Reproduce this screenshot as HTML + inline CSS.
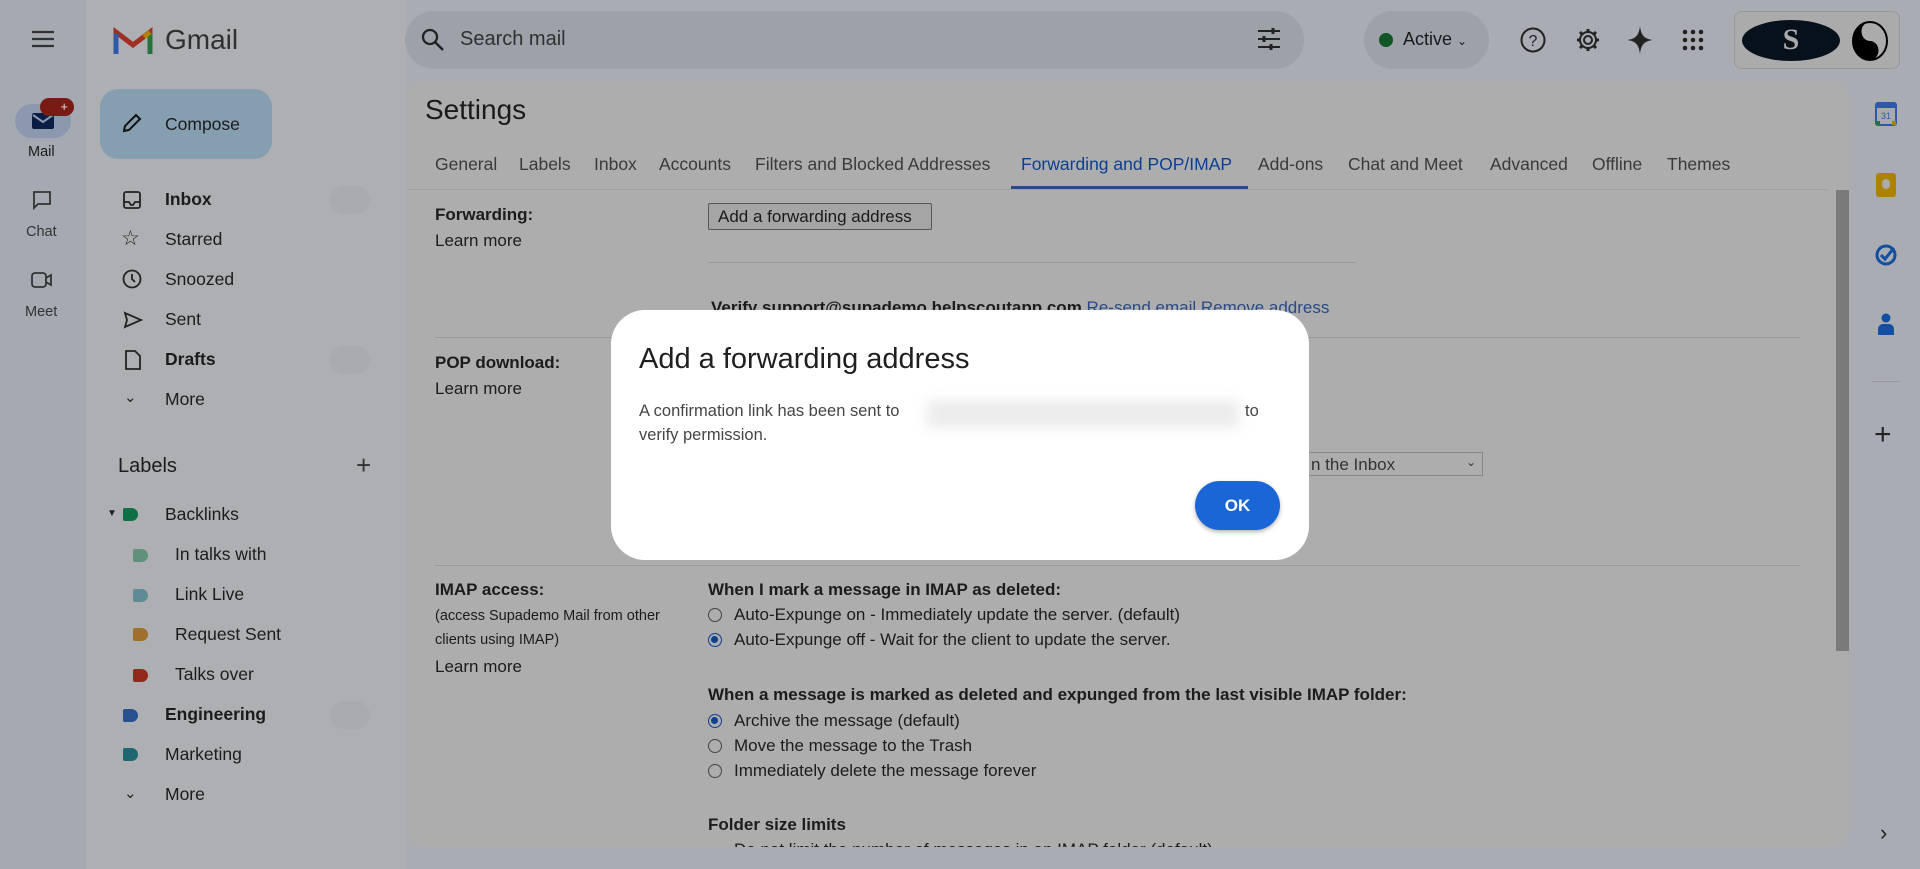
<!DOCTYPE html>
<html><head><meta charset="utf-8"><style>
*{box-sizing:border-box;margin:0;padding:0}
body{width:1920px;height:869px;overflow:hidden;background:#a9acb2;font-family:"Liberation Sans",Arial,sans-serif;color:#1a1a1a;position:relative}
.a{position:absolute;white-space:nowrap}
.nav{font-size:17.5px;color:#1c1c1c}
.b{font-weight:bold}
.link{color:#2a4a85}
.tab{font-size:17.5px;color:#3a3a3a;top:154px}
.lbl{font-size:17px;color:#1c1c1c}
.radio{width:14px;height:14px;border:1.5px solid #444;border-radius:50%;}
.radio.on{border-color:#0d3f8f}
.radio.on::after{content:"";position:absolute;left:2px;top:2px;width:7px;height:7px;border-radius:50%;background:#0d3f8f}
.tag{width:15px;height:13px;border-radius:2px 7px 7px 2px}
</style></head><body>
<!-- left rail -->
<div class="a" style="left:0;top:0;width:86px;height:869px;background:#a5a9b1"></div>
<svg class="a" style="left:30px;top:29px" width="26" height="20" viewBox="0 0 26 20"><path d="M2 3h22M2 10h22M2 17h22" stroke="#333" stroke-width="2.2"/></svg>
<div class="a" style="left:15px;top:104px;width:56px;height:34px;border-radius:17px;background:#8c98ad"></div>
<svg class="a" style="left:31px;top:111px" width="24" height="20" viewBox="0 0 24 20"><rect x="1" y="2" width="22" height="16" rx="2" fill="#0b1d44"/><path d="M2 4l10 7 10-7" stroke="#8c98ad" stroke-width="2" fill="none"/></svg>
<div class="a" style="left:40px;top:98px;width:34px;height:18px;border-radius:9px;background:#7a1a15;color:#ddd;font-size:13px;text-align:right;padding-right:6px;line-height:17px">+</div>
<div class="a" style="left:28px;top:144px;font-size:14.5px;color:#1c1c1c">Mail</div>
<svg class="a" style="left:31px;top:189px" width="22" height="22" viewBox="0 0 22 22"><path d="M3 3h16v12H7l-4 4z" stroke="#333" stroke-width="1.8" fill="none"/></svg>
<div class="a" style="left:26px;top:224px;font-size:14.5px;color:#333">Chat</div>
<svg class="a" style="left:30px;top:270px" width="24" height="20" viewBox="0 0 24 20"><rect x="2" y="3" width="14" height="14" rx="3" stroke="#333" stroke-width="1.8" fill="none"/><path d="M16 8l5-3v10l-5-3" stroke="#333" stroke-width="1.8" fill="none"/></svg>
<div class="a" style="left:25px;top:304px;font-size:14.5px;color:#333">Meet</div>
<!-- sidebar -->
<div class="a" style="left:86px;top:0;width:320px;height:869px;background:#adafb3"></div>
<svg class="a" style="left:113px;top:26px" width="40" height="30" viewBox="0 0 40 30"><path d="M3 28V6l17 13L37 6v22" fill="none" stroke="#a02e24" stroke-width="5"/><path d="M3 28V8" stroke="#2d5aa8" stroke-width="5"/><path d="M37 28V8" stroke="#247339" stroke-width="5"/><path d="M37 6l-6 5" stroke="#ad8203" stroke-width="5"/></svg>
<div class="a" style="left:165px;top:24px;font-size:28px;color:#303030">Gmail</div>
<div class="a" style="left:100px;top:89px;width:172px;height:70px;border-radius:18px;background:#869fb0"></div>
<svg class="a" style="left:120px;top:111px" width="24" height="24" viewBox="0 0 24 24"><path d="M4 20l1-5L16 4l4 4L9 19z" fill="none" stroke="#111" stroke-width="2"/></svg>
<div class="a nav" style="left:165px;top:114px">Compose</div>
<div class="a" style="left:330px;top:186px;width:40px;height:28px;border-radius:14px;background:#a8aaae"></div>
<div class="a" style="left:330px;top:346px;width:40px;height:28px;border-radius:14px;background:#a8aaae"></div>
<div class="a" style="left:330px;top:701px;width:40px;height:28px;border-radius:14px;background:#a8aaae"></div>
<svg class="a" style="left:121px;top:189px" width="22" height="22" viewBox="0 0 22 22"><rect x="3" y="3" width="16" height="16" rx="2" fill="none" stroke="#222" stroke-width="1.8"/><path d="M3 13h5l2 3h2l2-3h5" fill="none" stroke="#222" stroke-width="1.8"/></svg>
<div class="a nav b" style="left:165px;top:189px">Inbox</div>
<div class="a" style="left:121px;top:226px;font-size:21px;color:#222">☆</div>
<div class="a nav" style="left:165px;top:229px">Starred</div>
<svg class="a" style="left:121px;top:268px" width="22" height="22" viewBox="0 0 22 22"><circle cx="11" cy="11" r="8.5" fill="none" stroke="#222" stroke-width="1.8"/><path d="M11 6v5l3 3" fill="none" stroke="#222" stroke-width="1.8"/></svg>
<div class="a nav" style="left:165px;top:269px">Snoozed</div>
<svg class="a" style="left:122px;top:309px" width="22" height="22" viewBox="0 0 22 22"><path d="M3 4l16 7-16 7 2-7z" fill="none" stroke="#222" stroke-width="1.8"/></svg>
<div class="a nav" style="left:165px;top:309px">Sent</div>
<svg class="a" style="left:122px;top:349px" width="22" height="22" viewBox="0 0 22 22"><path d="M4 2h9l5 5v13H4z" fill="none" stroke="#222" stroke-width="1.8"/></svg>
<div class="a nav b" style="left:165px;top:349px">Drafts</div>
<div class="a" style="left:124px;top:388px;font-size:15px;color:#222">⌄</div>
<div class="a nav" style="left:165px;top:389px">More</div>
<div class="a" style="left:118px;top:455px;font-size:20px;color:#1c1c1c">Labels</div>
<div class="a" style="left:356px;top:450px;font-size:26px;color:#333;font-weight:300">+</div>
<div class="a" style="left:107px;top:508px;font-size:10px;color:#222">▼</div>
<div class="a tag" style="left:123px;top:508px;background:#0f7044"></div>
<div class="a nav" style="left:165px;top:504px">Backlinks</div>
<div class="a tag" style="left:133px;top:549px;background:#60917a"></div>
<div class="a nav" style="left:175px;top:544px">In talks with</div>
<div class="a tag" style="left:133px;top:589px;background:#5f8b94"></div>
<div class="a nav" style="left:175px;top:584px">Link Live</div>
<div class="a tag" style="left:133px;top:628px;background:#a06f2b"></div>
<div class="a nav" style="left:175px;top:624px">Request Sent</div>
<div class="a tag" style="left:133px;top:669px;background:#95281c"></div>
<div class="a nav" style="left:175px;top:664px">Talks over</div>
<div class="a tag" style="left:123px;top:709px;background:#285091"></div>
<div class="a nav b" style="left:165px;top:704px">Engineering</div>
<div class="a tag" style="left:123px;top:748px;background:#1c6770"></div>
<div class="a nav" style="left:165px;top:744px">Marketing</div>
<div class="a" style="left:124px;top:784px;font-size:15px;color:#222">⌄</div>
<div class="a nav" style="left:165px;top:784px">More</div>
<!-- top bar -->
<div class="a" style="left:405px;top:11px;width:899px;height:58px;border-radius:29px;background:#9da1a8"></div>
<svg class="a" style="left:420px;top:27px" width="26" height="26" viewBox="0 0 26 26"><circle cx="10" cy="10" r="7" fill="none" stroke="#222" stroke-width="2.3"/><path d="M15 15l8 8" stroke="#222" stroke-width="2.5"/></svg>
<div class="a" style="left:460px;top:28px;font-size:20px;color:#303030">Search mail</div>
<svg class="a" style="left:1256px;top:27px" width="26" height="24" viewBox="0 0 26 24"><path d="M2 4h22M2 12h22M2 20h22" stroke="#222" stroke-width="2"/><path d="M17 1v6M8 9v6M15 17v6" stroke="#222" stroke-width="3"/></svg>
<div class="a" style="left:1364px;top:11px;width:125px;height:58px;border-radius:29px;background:#9da1a8"></div>
<div class="a" style="left:1379px;top:33px;width:14px;height:14px;border-radius:50%;background:#105626"></div>
<div class="a" style="left:1403px;top:29px;font-size:18px;color:#1a1a1a">Active <span style="font-size:12px">⌄</span></div>
<svg class="a" style="left:1519px;top:26px" width="28" height="28" viewBox="0 0 28 28"><circle cx="14" cy="14" r="11.5" fill="none" stroke="#222" stroke-width="2"/><text x="14" y="20" text-anchor="middle" font-size="16" font-family="Liberation Sans" fill="#222">?</text></svg>
<svg class="a" style="left:1574px;top:26px" width="28" height="28" viewBox="0 0 28 28"><circle cx="14" cy="14" r="4" fill="none" stroke="#222" stroke-width="2"/><path d="M14 3v4M14 21v4M3 14h4M21 14h4M6 6l3 3M19 19l3 3M6 22l3-3M19 9l3-3" stroke="#222" stroke-width="3"/><circle cx="14" cy="14" r="8" fill="none" stroke="#222" stroke-width="2"/></svg>
<svg class="a" style="left:1626px;top:25px" width="28" height="30" viewBox="0 0 28 30"><path d="M14 1C15 10 18 14 27 15 18 16 15 20 14 29 13 20 10 16 1 15 10 14 13 10 14 1z" fill="#222"/></svg>
<svg class="a" style="left:1681px;top:28px" width="24" height="24" viewBox="0 0 24 24" fill="#222"><circle cx="4" cy="4" r="2.3"/><circle cx="12" cy="4" r="2.3"/><circle cx="20" cy="4" r="2.3"/><circle cx="4" cy="12" r="2.3"/><circle cx="12" cy="12" r="2.3"/><circle cx="20" cy="12" r="2.3"/><circle cx="4" cy="20" r="2.3"/><circle cx="12" cy="20" r="2.3"/><circle cx="20" cy="20" r="2.3"/></svg>
<div class="a" style="left:1734px;top:11px;width:166px;height:58px;border-radius:8px;background:#ababab;border:1px solid #999"></div>
<div class="a" style="left:1742px;top:20px;width:98px;height:41px;border-radius:50%;background:#06111b;color:#aaa;font:bold 30px 'Liberation Serif',serif;text-align:center;line-height:40px">S</div>
<svg class="a" style="left:1850px;top:20px" width="40" height="42" viewBox="0 0 40 42"><ellipse cx="20" cy="21" rx="17" ry="19" fill="#ababab" stroke="#000" stroke-width="2"/><path d="M20 2a17 19 0 0 0 0 38a8.5 9.5 0 0 0 0-19a8.5 9.5 0 0 1 0-19z" fill="#000"/><circle cx="20" cy="11" r="3" fill="#ababab"/><circle cx="20" cy="31" r="3" fill="#000"/></svg>
<!-- settings card -->
<div class="a" style="left:408px;top:81px;width:1441px;height:766px;background:#adadad;border-radius:16px"></div>
<div class="a" style="left:425px;top:94px;font-size:28px;color:#1a1a1a">Settings</div>
<div class="a tab" style="left:435px">General</div>
<div class="a tab" style="left:519px">Labels</div>
<div class="a tab" style="left:594px">Inbox</div>
<div class="a tab" style="left:659px">Accounts</div>
<div class="a tab" style="left:755px">Filters and Blocked Addresses</div>
<div class="a tab" style="left:1021px;color:#0d3f8f">Forwarding and POP/IMAP</div>
<div class="a tab" style="left:1258px">Add-ons</div>
<div class="a tab" style="left:1348px">Chat and Meet</div>
<div class="a tab" style="left:1490px">Advanced</div>
<div class="a tab" style="left:1592px">Offline</div>
<div class="a tab" style="left:1667px">Themes</div>
<div class="a" style="left:408px;top:189px;width:1420px;height:1px;background:#a0a0a0"></div>
<div class="a" style="left:1011px;top:186px;width:237px;height:3px;background:#2a4a85"></div>
<div class="a" style="left:1836px;top:190px;width:13px;height:461px;background:#7a7a7a"></div>
<div class="a lbl b" style="left:435px;top:205px">Forwarding:</div>
<div class="a lbl link" style="left:435px;top:231px">Learn more</div>
<div class="a" style="left:708px;top:203px;width:224px;height:27px;border:1px solid #555;background:#a5a5a5;border-radius:2px;font-size:17px;padding:3px 9px">Add a forwarding address</div>
<div class="a" style="left:708px;top:262px;width:648px;height:1px;background:#999"></div>
<div class="a lbl" style="left:711px;top:298px"><b>Verify support@supademo.helpscoutapp.com</b> <span class="link">Re-send email Remove address</span></div>
<div class="a" style="left:435px;top:337px;width:1365px;height:1px;background:#999"></div>
<div class="a lbl b" style="left:435px;top:353px">POP download:</div>
<div class="a lbl link" style="left:435px;top:379px">Learn more</div>
<div class="a" style="left:1200px;top:452px;width:283px;height:24px;border:1px solid #888;font-size:17px;padding:2px 6px;color:#333;padding-left:110px">n the Inbox<span style="position:absolute;right:6px;font-size:12px">⌄</span></div>
<div class="a" style="left:435px;top:565px;width:1365px;height:1px;background:#999"></div>
<div class="a lbl b" style="left:435px;top:580px">IMAP access:</div>
<div class="a" style="left:435px;top:608px;font-size:14.5px;color:#1c1c1c">(access Supademo Mail from other</div>
<div class="a" style="left:435px;top:632px;font-size:14.5px;color:#1c1c1c">clients using IMAP)</div>
<div class="a lbl link" style="left:435px;top:657px">Learn more</div>
<div class="a lbl b" style="left:708px;top:580px">When I mark a message in IMAP as deleted:</div>
<div class="a radio" style="left:708px;top:608px"></div><div class="a lbl" style="left:734px;top:605px">Auto-Expunge on - Immediately update the server. (default)</div>
<div class="a radio on" style="left:708px;top:633px"></div><div class="a lbl" style="left:734px;top:630px">Auto-Expunge off - Wait for the client to update the server.</div>
<div class="a lbl b" style="left:708px;top:685px">When a message is marked as deleted and expunged from the last visible IMAP folder:</div>
<div class="a radio on" style="left:708px;top:714px"></div><div class="a lbl" style="left:734px;top:711px">Archive the message (default)</div>
<div class="a radio" style="left:708px;top:739px"></div><div class="a lbl" style="left:734px;top:736px">Move the message to the Trash</div>
<div class="a radio" style="left:708px;top:764px"></div><div class="a lbl" style="left:734px;top:761px">Immediately delete the message forever</div>
<div class="a lbl b" style="left:708px;top:815px">Folder size limits</div>
<div class="a" style="left:708px;top:840px;width:1140px;height:7px;overflow:hidden"><div class="lbl" style="position:absolute;left:26px;top:0">Do not limit the number of messages in an IMAP folder (default)</div></div>
<!-- right panel -->
<svg class="a" style="left:1875px;top:102px" width="22" height="24" viewBox="0 0 22 24"><rect x="1" y="1" width="20" height="22" rx="2" fill="#aaa" stroke="#2d5aa8" stroke-width="2"/><rect x="1" y="1" width="20" height="5" fill="#2d5aa8"/><path d="M1 19h4v4H1z" fill="#247339"/><path d="M17 19h4v4h-4z" fill="#ad8203"/><text x="11" y="17" font-size="9" text-anchor="middle" fill="#2d5aa8" font-family="Liberation Sans">31</text></svg>
<div class="a" style="left:1876px;top:173px;width:20px;height:24px;border-radius:3px;background:#ad8203"></div>
<div class="a" style="left:1882px;top:179px;width:8px;height:10px;border-radius:4px;background:#aaa"></div>
<svg class="a" style="left:1874px;top:243px" width="24" height="24" viewBox="0 0 24 24"><circle cx="12" cy="12" r="9" fill="none" stroke="#124fa0" stroke-width="3"/><path d="M7 12l4 4 9-11" fill="none" stroke="#124fa0" stroke-width="3"/></svg>
<svg class="a" style="left:1876px;top:312px" width="20" height="24" viewBox="0 0 20 24"><circle cx="10" cy="6" r="4.5" fill="#124fa0"/><path d="M2 23v-6a5 5 0 0 1 5-5h6a5 5 0 0 1 5 5v6z" fill="#124fa0"/></svg>
<div class="a" style="left:1872px;top:381px;width:28px;height:1px;background:#999"></div>
<div class="a" style="left:1874px;top:418px;font-size:30px;color:#222;font-weight:300">+</div>
<div class="a" style="left:1880px;top:820px;font-size:22px;color:#222">›</div>
<!-- dialog -->
<div class="a" style="left:611px;top:310px;width:698px;height:250px;background:#fff;border-radius:34px"></div>
<div class="a" style="left:639px;top:343px;font-size:29px;color:#1f1f1f">Add a forwarding address</div>
<div class="a" style="left:639px;top:402px;font-size:16.5px;color:#444746">A confirmation link has been sent to</div>
<div class="a" style="left:927px;top:400px;width:312px;height:28px;background:#ececec;filter:blur(6px)"></div>
<div class="a" style="left:1245px;top:402px;font-size:16.5px;color:#444746">to</div>
<div class="a" style="left:639px;top:426px;font-size:16.5px;color:#444746">verify permission.</div>
<div class="a" style="left:1195px;top:481px;width:85px;height:49px;border-radius:25px;background:#1b66d6;color:#fff;font-size:17px;font-weight:bold;text-align:center;line-height:49px;box-shadow:0 2px 4px rgba(0,0,0,.3)">OK</div>
</body></html>
